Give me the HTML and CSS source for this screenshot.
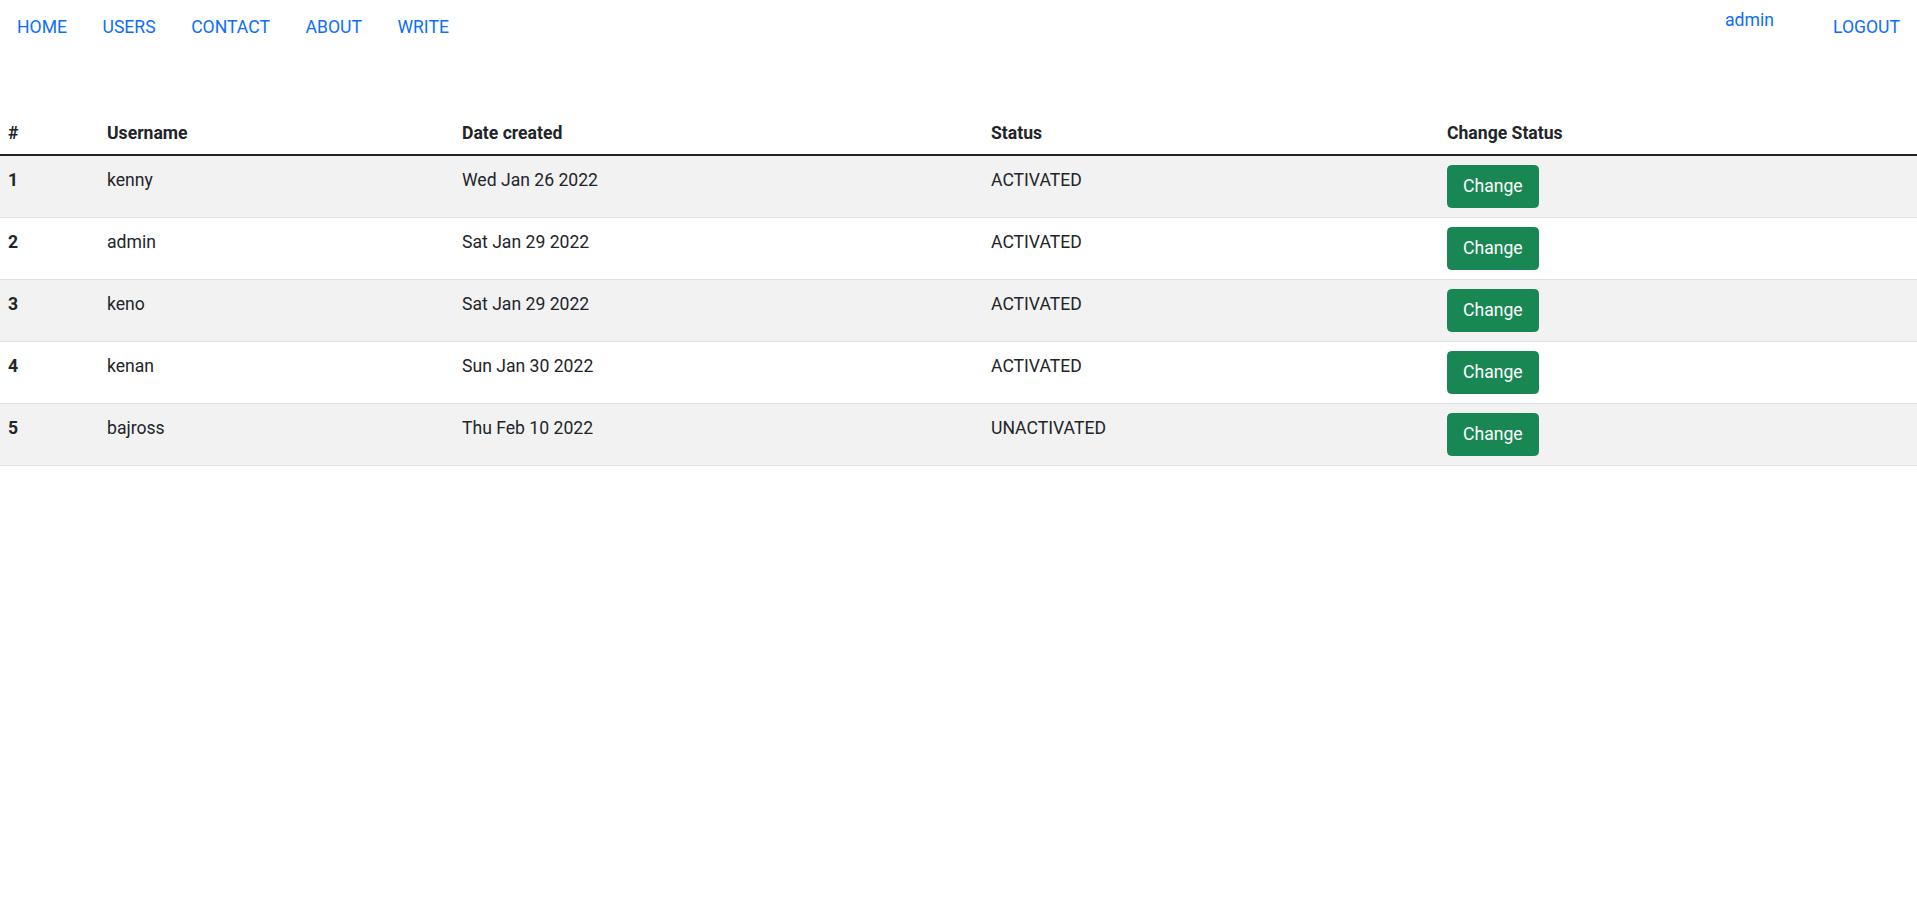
FILE: index.html
```html
<!DOCTYPE html>
<html lang="en">
<head>
<meta charset="utf-8">
<title>Users</title>
<link rel="stylesheet" href="styles.css">
</head>
<body>
<header class="topnav">
  <nav class="nav-left">
    <a class="nav-link" href="#">HOME</a>
    <a class="nav-link" href="#">USERS</a>
    <a class="nav-link" href="#">CONTACT</a>
    <a class="nav-link" href="#">ABOUT</a>
    <a class="nav-link" href="#">WRITE</a>
  </nav>
  <div class="nav-right">
    <a class="nav-user" href="#">admin</a>
    <a class="nav-link" href="#">LOGOUT</a>
  </div>
</header>
<main>
  <table class="users-table">
    <colgroup>
      <col class="col-num">
      <col class="col-user">
      <col class="col-date">
      <col class="col-status">
      <col class="col-change">
    </colgroup>
    <thead>
      <tr>
        <th>#</th>
        <th>Username</th>
        <th>Date created</th>
        <th>Status</th>
        <th>Change Status</th>
      </tr>
    </thead>
    <tbody>
      <tr class="odd">
        <th class="row-num">1</th><td>kenny</td><td>Wed Jan 26 2022</td><td>ACTIVATED</td>
        <td class="btn-cell"><button class="btn-change">Change</button></td>
      </tr>
      <tr>
        <th class="row-num">2</th><td>admin</td><td>Sat Jan 29 2022</td><td>ACTIVATED</td>
        <td class="btn-cell"><button class="btn-change">Change</button></td>
      </tr>
      <tr class="odd">
        <th class="row-num">3</th><td>keno</td><td>Sat Jan 29 2022</td><td>ACTIVATED</td>
        <td class="btn-cell"><button class="btn-change">Change</button></td>
      </tr>
      <tr>
        <th class="row-num">4</th><td>kenan</td><td>Sun Jan 30 2022</td><td>ACTIVATED</td>
        <td class="btn-cell"><button class="btn-change">Change</button></td>
      </tr>
      <tr class="odd">
        <th class="row-num">5</th><td>bajross</td><td>Thu Feb 10 2022</td><td>UNACTIVATED</td>
        <td class="btn-cell"><button class="btn-change">Change</button></td>
      </tr>
    </tbody>
  </table>
</main>
</body>
</html>
```
FILE: styles.css
```css
* { box-sizing: border-box; }

body {
  margin: 0;
  font-family: Roboto, "Liberation Sans", sans-serif;
  font-size: 17.6px;
  line-height: 27px;
  color: #212529;
  background: #fff;
}

a { text-decoration: none; color: #0d6efd; }

.topnav {
  display: flex;
  justify-content: space-between;
  align-items: flex-start;
  height: 60px;
  padding: 0 17px;
}

.nav-left {
  display: flex;
  gap: 35.5px;
  padding-top: 14px;
}

.nav-right {
  display: flex;
  align-items: flex-start;
  gap: 59px;
}

.nav-user { padding-top: 7px; }
.nav-right .nav-link { padding-top: 14px; }

.users-table {
  width: 100%;
  margin-top: 48.5px;
  border-collapse: collapse;
  table-layout: fixed;
}

.col-num { width: 99px; }
.col-user { width: 355px; }
.col-date { width: 529px; }
.col-status { width: 456px; }

.users-table thead th {
  text-align: left;
  font-weight: 700;
  padding: 11px 8px 7px;
  border-bottom: 2px solid #212529;
  vertical-align: top;
}

.users-table tbody th,
.users-table tbody td {
  text-align: left;
  padding: 11px 8px 9px;
  vertical-align: top;
  border-bottom: 1px solid #dee2e6;
}

.users-table .row-num { font-weight: 700; }

.users-table tr.odd { background: #f2f2f2; }

.users-table .btn-cell { padding-top: 9px; }

.btn-change {
  display: inline-block;
  font-family: inherit;
  font-size: 17.6px;
  line-height: 27px;
  color: #fff;
  background: #198754;
  border: 1px solid #198754;
  border-radius: 4.5px;
  padding: 7px 15px;
  cursor: pointer;
}
```
